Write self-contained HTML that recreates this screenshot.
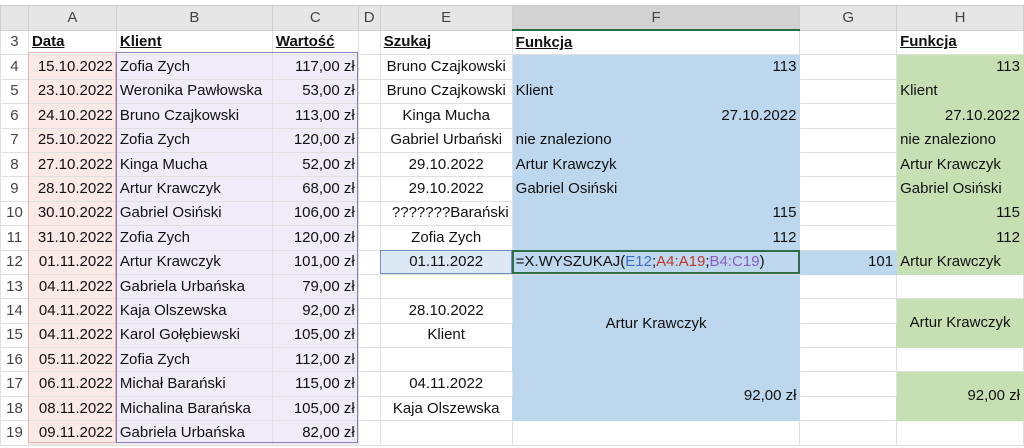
<!DOCTYPE html>
<html><head><meta charset="utf-8"><style>
body{margin:0;width:1024px;height:448px;overflow:hidden;background:#fff;font-family:"Liberation Sans",Arial,sans-serif;font-size:15px;color:#111}
table{position:absolute;left:0;top:5px;border-collapse:collapse;table-layout:fixed}
td{border:1px solid #e0e0e0;height:23.4px;padding:0 3px;white-space:nowrap;overflow:visible;line-height:22px}
tr.h td{background:#e6e6e6;text-align:center;height:23px;color:#444;border-color:#cfcfcf}
tr.h td.f{background:#d2d2d2;border-bottom:2px solid #217346}
td.n{text-align:center;color:#444;padding:0}
.r{text-align:right}.c{text-align:center}
.A{background:#fbe9e8}.B{background:#efebf7}
.F{background:#bdd7ee;border-color:#bdd7ee}
.H{background:#c6e0b4;border-color:#c6e0b4}
.hd{font-weight:bold;text-decoration:underline}
.e12{background:#dde8f5;outline:1.5px solid #6f8fc6;outline-offset:-1px}
.f12{background:#bdd7ee;outline:2px solid #2f6f48;outline-offset:-2px}
</style></head><body>
<table>
<colgroup><col style="width:28px"><col style="width:88px"><col style="width:156px"><col style="width:86px"><col style="width:22px"><col style="width:132px"><col style="width:288px"><col style="width:97px"><col style="width:127px"></colgroup>
<tr class="h"><td style="background:#e6e6e6"></td><td>A</td><td>B</td><td>C</td><td>D</td><td>E</td><td class="f">F</td><td>G</td><td>H</td></tr>
<tr><td class="n">3</td><td class="hd">Data</td><td class="hd">Klient</td><td class="hd">Wartość</td><td></td><td class="hd">Szukaj</td><td class="hd">Funkcja</td><td></td><td class="hd">Funkcja</td></tr>
<tr><td class="n">4</td><td class="A r">15.10.2022</td><td class="B">Zofia Zych</td><td class="B r">117,00 zł</td><td></td><td class="c">Bruno Czajkowski</td><td class="F r">113</td><td></td><td class="H r">113</td></tr>
<tr><td class="n">5</td><td class="A r">23.10.2022</td><td class="B">Weronika Pawłowska</td><td class="B r">53,00 zł</td><td></td><td class="c">Bruno Czajkowski</td><td class="F">Klient</td><td></td><td class="H">Klient</td></tr>
<tr><td class="n">6</td><td class="A r">24.10.2022</td><td class="B">Bruno Czajkowski</td><td class="B r">113,00 zł</td><td></td><td class="c">Kinga Mucha</td><td class="F r">27.10.2022</td><td></td><td class="H r">27.10.2022</td></tr>
<tr><td class="n">7</td><td class="A r">25.10.2022</td><td class="B">Zofia Zych</td><td class="B r">120,00 zł</td><td></td><td class="c">Gabriel Urbański</td><td class="F">nie znaleziono</td><td></td><td class="H">nie znaleziono</td></tr>
<tr><td class="n">8</td><td class="A r">27.10.2022</td><td class="B">Kinga Mucha</td><td class="B r">52,00 zł</td><td></td><td class="c">29.10.2022</td><td class="F">Artur Krawczyk</td><td></td><td class="H">Artur Krawczyk</td></tr>
<tr><td class="n">9</td><td class="A r">28.10.2022</td><td class="B">Artur Krawczyk</td><td class="B r">68,00 zł</td><td></td><td class="c">29.10.2022</td><td class="F">Gabriel Osiński</td><td></td><td class="H">Gabriel Osiński</td></tr>
<tr><td class="n">10</td><td class="A r">30.10.2022</td><td class="B">Gabriel Osiński</td><td class="B r">106,00 zł</td><td></td><td class="r">???????Barański</td><td class="F r">115</td><td></td><td class="H r">115</td></tr>
<tr><td class="n">11</td><td class="A r">31.10.2022</td><td class="B">Zofia Zych</td><td class="B r">120,00 zł</td><td></td><td class="c">Zofia Zych</td><td class="F r">112</td><td></td><td class="H r">112</td></tr>
<tr><td class="n">12</td><td class="A r">01.11.2022</td><td class="B">Artur Krawczyk</td><td class="B r">101,00 zł</td><td></td><td class="c e12">01.11.2022</td><td class="f12">=X.WYSZUKAJ(<span style="color:#3a6fc4">E12</span>;<span style="color:#c0392b">A4:A19</span>;<span style="color:#8e5bc4">B4:C19</span>)</td><td class="F r">101</td><td class="H">Artur Krawczyk</td></tr>
<tr><td class="n">13</td><td class="A r">04.11.2022</td><td class="B">Gabriela Urbańska</td><td class="B r">79,00 zł</td><td></td><td></td><td class="F"></td><td></td><td></td></tr>
<tr><td class="n">14</td><td class="A r">04.11.2022</td><td class="B">Kaja Olszewska</td><td class="B r">92,00 zł</td><td></td><td class="c">28.10.2022</td><td class="F c" rowspan="3" style="padding-bottom:22px">Artur Krawczyk</td><td></td><td class="H c" rowspan="2">Artur Krawczyk</td></tr>
<tr><td class="n">15</td><td class="A r">04.11.2022</td><td class="B">Karol Gołębiewski</td><td class="B r">105,00 zł</td><td></td><td class="c">Klient</td><td></td></tr>
<tr><td class="n">16</td><td class="A r">05.11.2022</td><td class="B">Zofia Zych</td><td class="B r">112,00 zł</td><td></td><td></td><td></td><td></td></tr>
<tr><td class="n">17</td><td class="A r">06.11.2022</td><td class="B">Michał Barański</td><td class="B r">115,00 zł</td><td></td><td class="c">04.11.2022</td><td class="F r" rowspan="2">92,00 zł</td><td></td><td class="H r" rowspan="2">92,00 zł</td></tr>
<tr><td class="n">18</td><td class="A r">08.11.2022</td><td class="B">Michalina Barańska</td><td class="B r">105,00 zł</td><td></td><td class="c">Kaja Olszewska</td><td></td></tr>
<tr><td class="n">19</td><td class="A r">09.11.2022</td><td class="B">Gabriela Urbańska</td><td class="B r">82,00 zł</td><td></td><td></td><td></td><td></td><td></td></tr>
</table>
<div style="position:absolute;left:28px;top:52px;width:88px;height:391px;border:1px solid #e8b4b0;box-sizing:border-box;pointer-events:none"></div>
<div style="position:absolute;left:116px;top:52px;width:242px;height:391px;border:1.5px solid #8e7bb8;box-sizing:border-box;pointer-events:none"></div>
</body></html>
